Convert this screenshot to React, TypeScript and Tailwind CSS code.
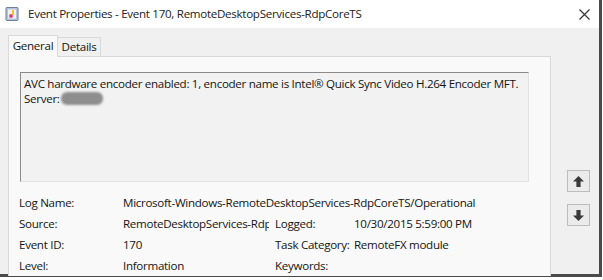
import React from 'react';

const ArrowBtn = ({ down }: { down?: boolean }) => (
  <div className="w-[23px] h-[22px] border border-[#bdbdbd] bg-[#ebebeb] flex items-center justify-center">
    <svg width="13" height="13" viewBox="0 0 13 13" className={down ? 'rotate-180' : ''}>
      <path d="M6.5 1 L12 6.5 L8.6 6.5 L8.6 12 L4.4 12 L4.4 6.5 L1 6.5 Z" fill="#3a3a3a" />
    </svg>
  </div>
);

const Row = ({ label, children }: { label: string; children: React.ReactNode }) => (
  <div className="flex h-[21px] items-center whitespace-nowrap">
    <div className="w-[104px] shrink-0">{label}</div>
    {children}
  </div>
);

const App = () => {
  return (
    <div className="w-[603px] h-[280px] bg-white overflow-hidden" style={{ fontFamily: '"Open Sans", "Noto Sans", sans-serif' }}>
      <div className="w-[602px] h-[277px] border-r-[3px] border-b-[3px] border-[#4a4a4a] bg-[#f0f0f0] flex flex-col text-[11.6px] text-[#141414] tracking-[-0.3px]">
        {/* title bar */}
        <div className="h-[28px] bg-white flex items-center shrink-0">
          <svg width="14" height="14" viewBox="0 0 14 14" className="ml-[5px] mr-[9px]">
            <rect x="1" y="0.5" width="12" height="13" rx="1" fill="#b9c3d6" stroke="#6f7d99" />
            <rect x="3" y="2.5" width="8" height="9" fill="#eef1f6" />
            <circle cx="6" cy="9" r="2" fill="#e0447a" />
            <rect x="7" y="3" width="2" height="5" fill="#f3c12b" />
          </svg>
          <span className="text-[11.6px] text-[#222]">Event Properties - Event 170, RemoteDesktopServices-RdpCoreTS</span>
          <svg width="11" height="11" viewBox="0 0 11 11" className="ml-auto mr-[9px]">
            <path d="M0.5 0.5 L10.5 10.5 M10.5 0.5 L0.5 10.5" stroke="#333" strokeWidth="1.2" />
          </svg>
        </div>

        <div className="flex flex-1 min-h-0">
          {/* tab control */}
          <div className="ml-[8px] mt-[7px] w-[543px] flex flex-col">
            <div className="flex items-end h-[22px]">
              <div className="h-[22px] w-[50px] border border-b-0 border-[#d9d9d9] bg-[#f9f9f9] flex items-center justify-center relative z-10 -mb-px pb-[1px]">
                General
              </div>
              <div className="h-[19px] w-[43px] border border-l-0 border-b-0 border-[#d9d9d9] bg-[#f0f0f0] flex items-center justify-center">
                Details
              </div>
            </div>
            <div className="flex-1 border border-b-0 border-[#d9d9d9] bg-[#f9f9f9] pt-[15px] pl-[11px] pr-[21px]">
              <div className="h-[110px] border border-t-[#8a8a8a] border-l-[#8a8a8a] border-r-[#e3e3e3] border-b-[#e3e3e3] bg-[#f2f2f2] pl-[3px] pt-[3px] leading-[15px]">
                <div className="whitespace-nowrap tracking-[-0.3px]">AVC hardware encoder enabled: 1, encoder name is Intel® Quick Sync Video H.264 Encoder MFT.</div>
                <div className="flex items-center">
                  Server:
                  <span className="inline-block ml-[1px] w-[42px] h-[13px] rounded-[6px] bg-[#8e8e8e] blur-[1px]" />
                </div>
              </div>
              <div className="mt-[10px] -ml-[1px]">
                <Row label="Log Name:">
                  <span>Microsoft-Windows-RemoteDesktopServices-RdpCoreTS/Operational</span>
                </Row>
                <Row label="Source:">
                  <span className="w-[146px] shrink-0 overflow-hidden mr-[6px]">RemoteDesktopServices-RdpCoreTS</span>
                  <span className="w-[79px] shrink-0">Logged:</span>
                  <span>10/30/2015 5:59:00 PM</span>
                </Row>
                <Row label="Event ID:">
                  <span className="w-[146px] shrink-0 mr-[6px]">170</span>
                  <span className="w-[79px] shrink-0">Task Category:</span>
                  <span>RemoteFX module</span>
                </Row>
                <Row label="Level:">
                  <span className="w-[146px] shrink-0 mr-[6px]">Information</span>
                  <span className="w-[79px] shrink-0">Keywords:</span>
                </Row>
              </div>
            </div>
          </div>

          {/* navigation arrows */}
          <div className="ml-[16px] mt-[142px] flex flex-col gap-[12px]">
            <ArrowBtn />
            <ArrowBtn down />
          </div>
        </div>
      </div>
    </div>
  );
};

export default App;
